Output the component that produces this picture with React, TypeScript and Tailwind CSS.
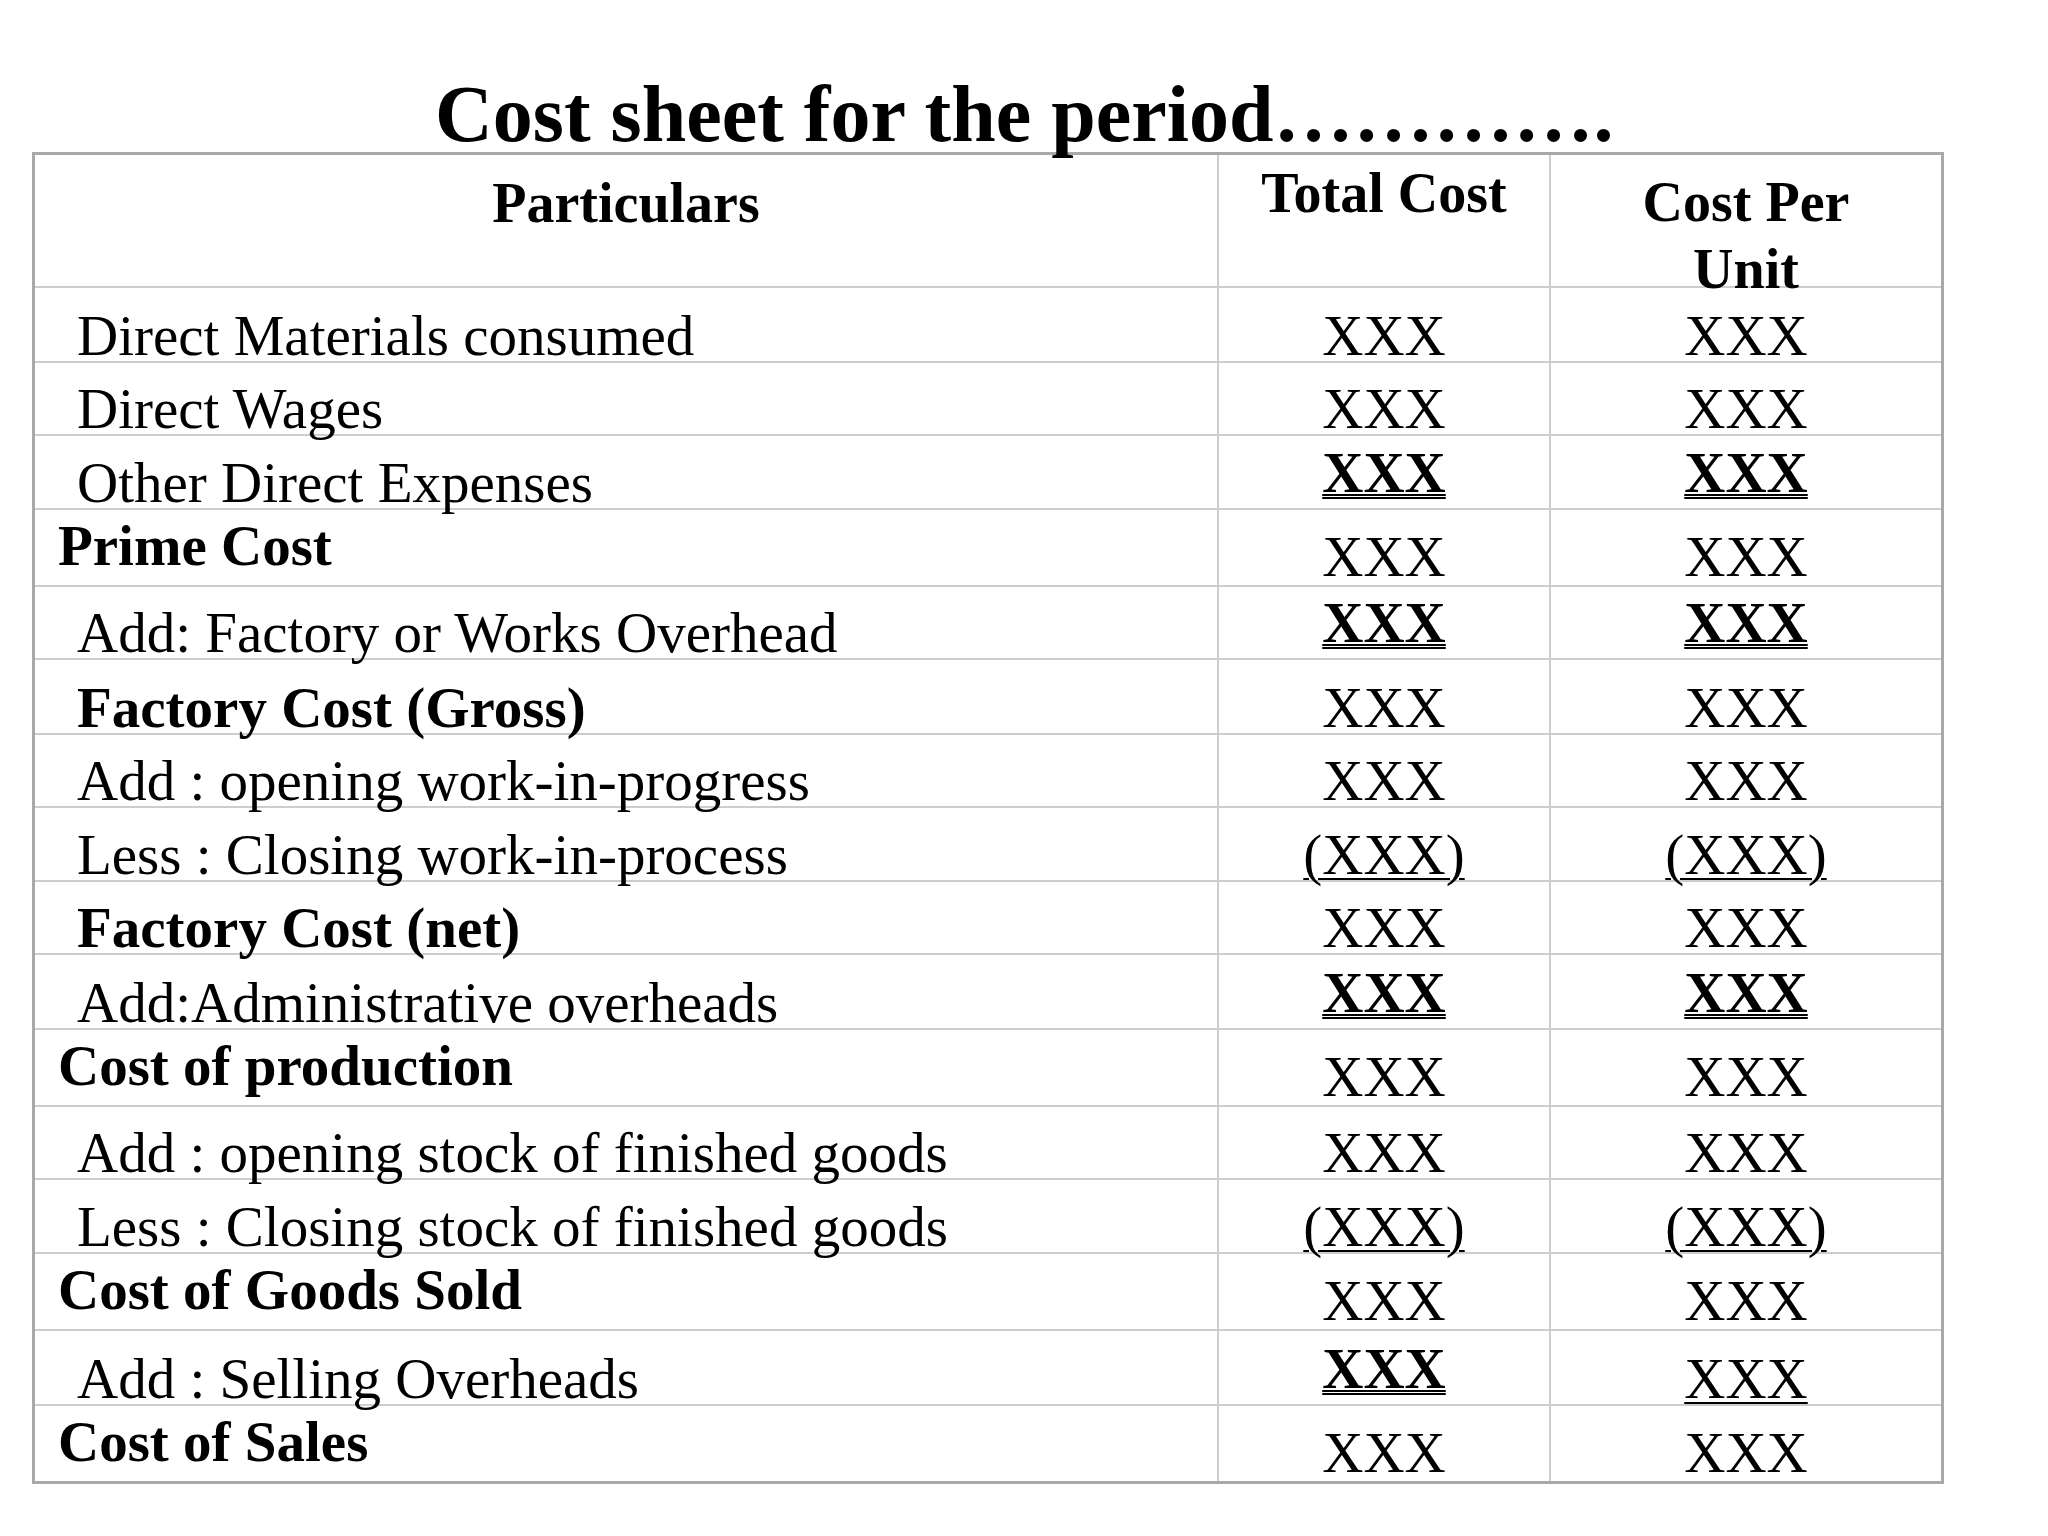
import React from "react";

// ─── Data ─────────────────────────────────────────────────────────────────────

type Mark = "plain" | "double" | "under";

interface Row {
  label: string;
  kind: "item" | "bold" | "heading";
  h: number;
  total: [string, Mark];
  unit: [string, Mark];
}

const X: [string, Mark] = ["XXX", "plain"];
const XD: [string, Mark] = ["XXX", "double"];
const XU: [string, Mark] = ["(XXX)", "under"];

const ROWS: Row[] = [
  { label: "Direct Materials consumed", kind: "item", h: 75, total: X, unit: X },
  { label: "Direct Wages", kind: "item", h: 73, total: X, unit: X },
  { label: "Other Direct Expenses", kind: "item", h: 74, total: XD, unit: XD },
  { label: "Prime Cost", kind: "heading", h: 77, total: X, unit: X },
  { label: "Add: Factory or Works Overhead", kind: "item", h: 73, total: XD, unit: XD },
  { label: "Factory Cost (Gross)", kind: "bold", h: 75, total: X, unit: X },
  { label: "Add : opening work-in-progress", kind: "item", h: 73, total: X, unit: X },
  { label: "Less : Closing work-in-process", kind: "item", h: 74, total: XU, unit: XU },
  { label: "Factory Cost (net)", kind: "bold", h: 73, total: X, unit: X },
  { label: "Add:Administrative overheads", kind: "item", h: 75, total: XD, unit: XD },
  { label: "Cost of production", kind: "heading", h: 77, total: X, unit: X },
  { label: "Add : opening stock of finished goods", kind: "item", h: 73, total: X, unit: X },
  { label: "Less : Closing stock of finished goods", kind: "item", h: 74, total: XU, unit: XU },
  { label: "Cost of Goods Sold", kind: "heading", h: 77, total: X, unit: X },
  { label: "Add : Selling Overheads", kind: "item", h: 75, total: XD, unit: ["XXX", "under"] },
  { label: "Cost of Sales", kind: "heading", h: 75, total: X, unit: X },
];

// ─── Cells ────────────────────────────────────────────────────────────────────

function Value({ v, heading }: { v: [string, Mark]; heading: boolean }) {
  const [text, mark] = v;
  if (mark === "double") {
    return (
      <div className="flex h-full items-end justify-center pb-[10px]">
        <span className="font-bold underline decoration-double decoration-2 underline-offset-2">
          {text}
        </span>
      </div>
    );
  }
  return (
    <div
      className={
        heading
          ? "flex h-full items-end justify-center pb-[3px]"
          : "flex h-full items-end justify-center"
      }
    >
      <span
        className={
          mark === "under"
            ? "underline decoration-2 underline-offset-4"
            : ""
        }
      >
        {text}
      </span>
    </div>
  );
}

function Label({ row }: { row: Row }) {
  if (row.kind === "heading") {
    return (
      <div className="flex h-full items-start pl-[23px] pt-[10px] font-bold">
        {row.label}
      </div>
    );
  }
  return (
    <div
      className={
        row.kind === "bold"
          ? "flex h-full items-end pl-[42px] font-bold"
          : "flex h-full items-end pl-[42px]"
      }
    >
      {row.label}
    </div>
  );
}

// ─── Page ─────────────────────────────────────────────────────────────────────

export default function App() {
  return (
    <div className="min-h-screen bg-white font-['Liberation_Serif','Times_New_Roman',serif] text-black">
      {/* Title */}
      <h1 className="whitespace-nowrap pl-[435px] pt-[76px] text-[80px] font-bold leading-[76px]">
        Cost sheet for the period………….
      </h1>

      {/* Sheet */}
      <div className="ml-[32px] w-[1912px] border-[3px] border-[#a9a9a9]">
        {/* Header */}
        <div className="grid h-[133px] grid-cols-[1182px_332px_1fr] border-b-2 border-[#cdcdcd] text-[56px] font-bold leading-none">
          <div className="pt-[20px] text-center">Particulars</div>
          <div className="border-l-2 border-[#cdcdcd] pt-[10px] text-center">
            Total Cost
          </div>
          <div className="border-l-2 border-[#cdcdcd] pt-[14px] text-center leading-[67px]">
            Cost Per
            <br />
            Unit
          </div>
        </div>

        {/* Body */}
        {ROWS.map((row, i) => (
          <div
            key={row.label}
            style={{ height: row.h }}
            className={
              i < ROWS.length - 1
                ? "grid grid-cols-[1182px_332px_1fr] border-b-2 border-[#cdcdcd] text-[57px] leading-[51px]"
                : "grid grid-cols-[1182px_332px_1fr] text-[57px] leading-[51px]"
            }
          >
            <Label row={row} />
            <div className="border-l-2 border-[#cdcdcd]">
              <Value v={row.total} heading={row.kind === "heading"} />
            </div>
            <div className="border-l-2 border-[#cdcdcd]">
              <Value v={row.unit} heading={row.kind === "heading"} />
            </div>
          </div>
        ))}
      </div>
    </div>
  );
}
